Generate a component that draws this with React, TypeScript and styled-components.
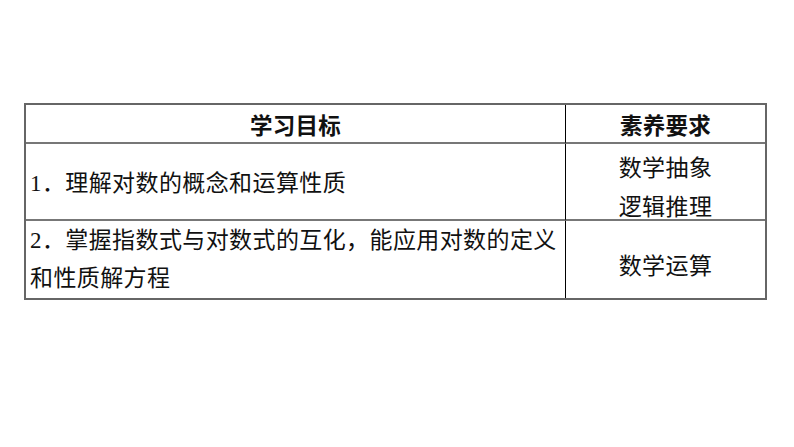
import React from "react";
import styled, { createGlobalStyle } from "styled-components";

const Global = createGlobalStyle`
  html, body { margin: 0; padding: 0; background: #ffffff; }
  body { width: 794px; height: 447px; overflow: hidden; }
`;

const Page = styled.div`
  padding: 103px 0 0 24px;
`;

const Table = styled.div`
  box-sizing: border-box;
  width: 743px;
  display: grid;
  grid-template-columns: 540px 1fr;
  grid-template-rows: 39px 77px 77px;
  border: 2px solid #666666;
  color: #111111;
  font-family: "Liberation Serif", "Noto Sans CJK SC", serif;
  font-size: 23px;
`;

const Cell = styled.div<{ $center?: boolean; $shift?: number; $last?: boolean; $left?: boolean }>`
  box-sizing: border-box;
  display: flex;
  flex-direction: column;
  justify-content: center;
  align-items: ${(p) => (p.$center ? "center" : "flex-start")};
  text-align: ${(p) => (p.$center ? "center" : "left")};
  padding: ${(p) => p.$shift ?? 0}px 0 0 ${(p) => (p.$center ? 0 : 4)}px;
  border-bottom: ${(p) => (p.$last ? "none" : "2px solid #777777")};
  border-right: ${(p) => (p.$left ? "1.5px solid #000000" : "none")};
  line-height: 38.5px;
  letter-spacing: 0.4px;
  overflow: visible;
`;

const Head = styled.span`
  font-family: "Noto Sans CJK SC", sans-serif;
  font-weight: 700;
  font-size: 22.5px;
  letter-spacing: 0.3px;
  line-height: 1;
`;

const Line = styled.span`
  display: block;
  white-space: nowrap;
`;

export default function App() {
  return (
    <>
      <Global />
      <Page>
        <Table>
          <Cell $center $left $shift={1}>
            <Head>学习目标</Head>
          </Cell>
          <Cell $center $shift={1}>
            <Head>素养要求</Head>
          </Cell>
          <Cell $left $shift={5}>
            <Line>1．理解对数的概念和运算性质</Line>
          </Cell>
          <Cell $center $shift={14}>
            <Line>数学抽象</Line>
            <Line>逻辑推理</Line>
          </Cell>
          <Cell $left $last $shift={1}>
            <Line>2．掌握指数式与对数式的互化，能应用对数的定义</Line>
            <Line>和性质解方程</Line>
          </Cell>
          <Cell $center $last $shift={15}>
            <Line>数学运算</Line>
          </Cell>
        </Table>
      </Page>
    </>
  );
}
